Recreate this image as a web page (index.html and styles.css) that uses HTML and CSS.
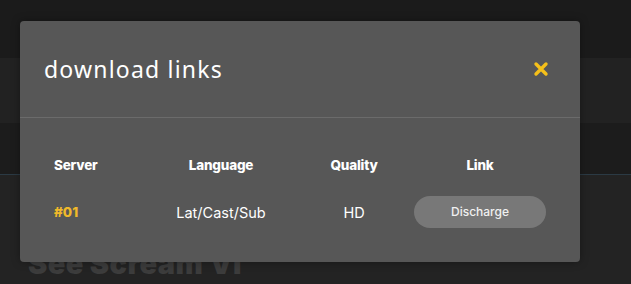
FILE: index.html
```html
<!DOCTYPE html>
<html lang="en">
<head>
<meta charset="utf-8">
<title>download links</title>
<link rel="stylesheet" href="styles.css">
</head>
<body>
<div class="page">
  <div class="band band-top"></div>
  <div class="band band-mid"></div>
  <div class="band band-dark"></div>
  <div class="band band-main">
    <h1 class="movie-title">See Scream VI</h1>
  </div>
</div>
<div class="modal">
  <div class="modal-header">
    <h2 class="modal-title">download links</h2>
    <button class="close" aria-label="close">
      <svg width="16" height="16" viewBox="0 0 16 16"><path d="M3 3 L13 13 M13 3 L3 13" stroke="#f5c01a" stroke-width="3.4" stroke-linecap="round"/></svg>
    </button>
  </div>
  <div class="modal-body">
    <div class="table">
      <div class="th left">Server</div>
      <div class="th">Language</div>
      <div class="th">Quality</div>
      <div class="th">Link</div>
      <div class="td left server">#01</div>
      <div class="td">Lat/Cast/Sub</div>
      <div class="td">HD</div>
      <div class="td"><a class="btn" href="#">Discharge</a></div>
    </div>
  </div>
</div>
</body>
</html>
```
FILE: styles.css
```css
* { box-sizing: border-box; }
html, body { margin: 0; padding: 0; }
body {
  width: 631px;
  height: 284px;
  overflow: hidden;
  background: #232323;
  font-family: "Inter", "Noto Sans", sans-serif;
  position: relative;
}
.page { display: flex; flex-direction: column; }
.band { width: 100%; }
.band-top { height: 58px; background: #1b1b1b; }
.band-mid { height: 65px; background: #222222; }
.band-dark { height: 52px; background: #1c1c1c; border-bottom: 1px solid #2b3a44; }
.band-main { height: 109px; background: #232323; padding: 72px 0 0 28px; }
.movie-title {
  margin: 0;
  font-family: "Inter", sans-serif;
  font-weight: 900;
  font-size: 29px;
  line-height: 34px;
  color: #3c3c3c;
  letter-spacing: 0.4px;
  white-space: nowrap;
}
.modal {
  position: absolute;
  left: 20px;
  top: 21px;
  width: 560px;
  height: 241px;
  background: #575757;
  border-radius: 4px;
  box-shadow: 0 0 8px rgba(0,0,0,0.35);
}
.modal-header {
  height: 97px;
  border-bottom: 1px solid #6b6b6b;
  display: flex;
  align-items: center;
  justify-content: space-between;
  padding: 0 31px 0 24px;
}
.modal-title {
  margin: 0;
  font-family: "Noto Sans", sans-serif;
  font-weight: 400;
  font-size: 23px;
  color: #ffffff;
  letter-spacing: 1.2px;
}
.close {
  background: none;
  border: 0;
  padding: 0;
  width: 16px;
  height: 16px;
  display: flex;
}
.modal-body { padding: 36px 24px 0 24px; }
.table {
  display: grid;
  grid-template-columns: 94px 166px 100px 152px;
  grid-template-rows: 22px 40px;
  row-gap: 16px;
  align-items: center;
}
.th {
  text-align: center;
  font-family: "Inter", sans-serif;
  font-weight: 800;
  font-size: 13.5px;
  color: #ffffff;
  letter-spacing: -0.2px;
}
.td {
  text-align: center;
  font-family: "Inter", sans-serif;
  font-size: 14.5px;
  color: #ffffff;
}
.left { text-align: left; padding-left: 10px; }
.server { color: #f0b92a; font-weight: 800; font-size: 13.5px; }
.btn {
  display: block;
  margin: 0 auto;
  width: 132px;
  height: 32px;
  line-height: 32px;
  border-radius: 16px;
  background: #787878;
  color: #f0f0f0;
  text-decoration: none;
  font-size: 12px;
  font-weight: 500;
}
```
